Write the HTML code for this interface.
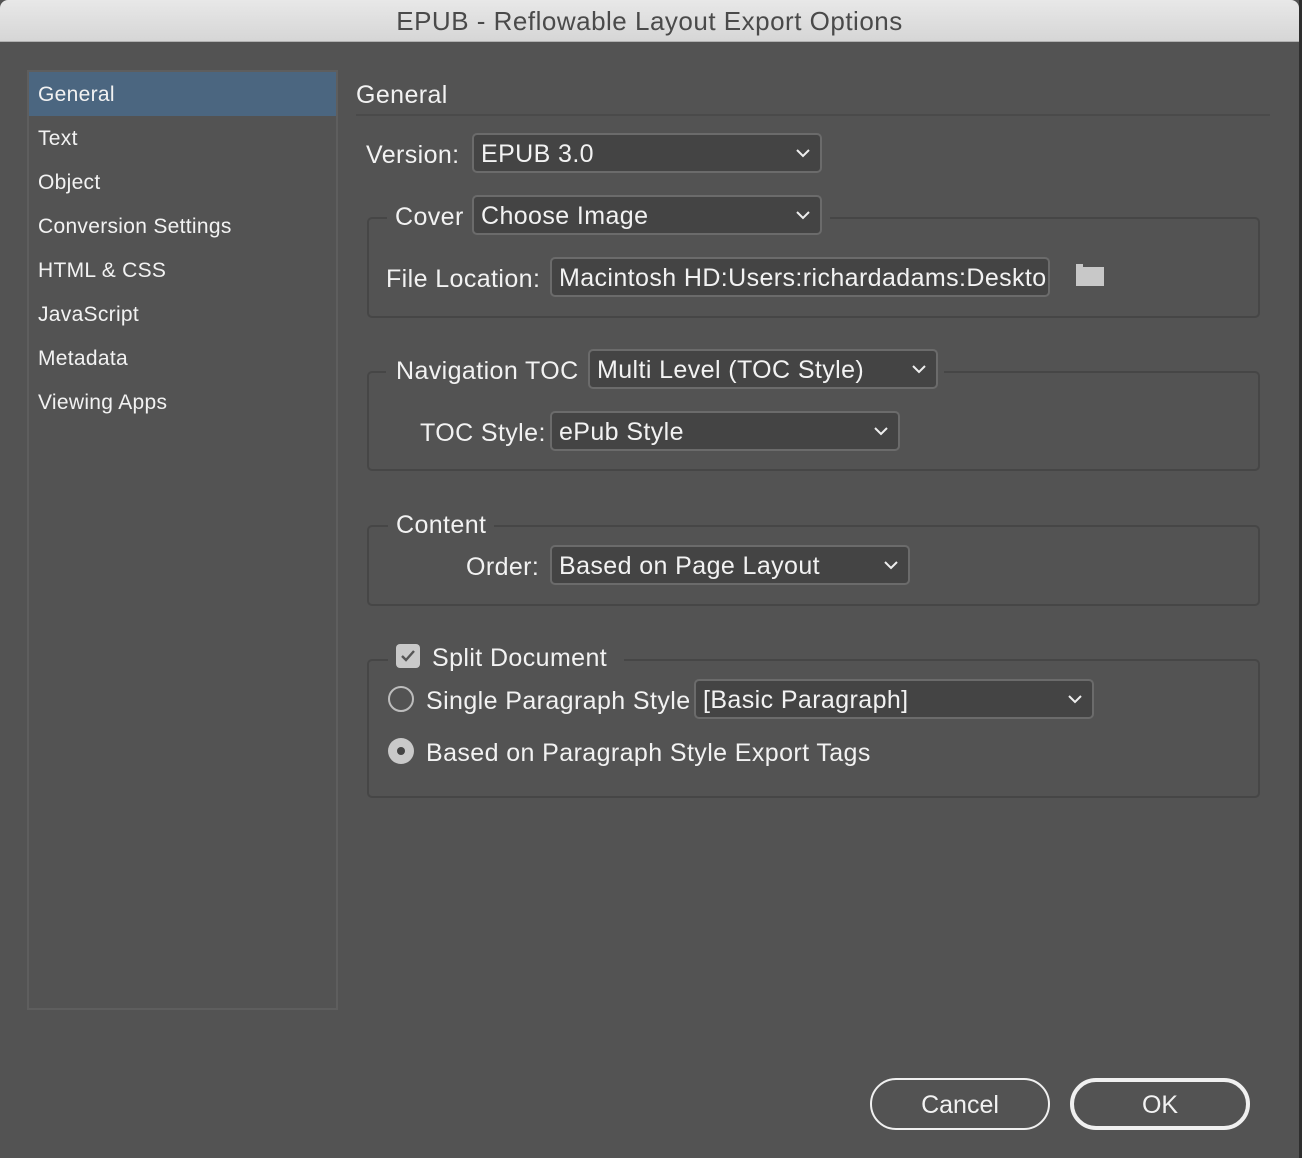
<!DOCTYPE html>
<html><head><meta charset="utf-8"><style>
*{box-sizing:border-box;margin:0;padding:0}
body{width:1302px;height:1158px;background:#535353;font-family:"Liberation Sans",sans-serif;color:#f2f2f2;position:relative;overflow:hidden}
.a{position:absolute;white-space:nowrap}
#title{left:0;top:0;width:1299px;height:42px;background:linear-gradient(#e8e8e8,#d6d6d6);border-bottom:1px solid #b0b0b0;border-radius:8px 8px 0 0;color:#4a4a4a;font-size:26px;letter-spacing:0.5px;text-align:center;line-height:42px;padding-left:0}
#edge{left:1299px;top:0;width:3px;height:1158px;background:#2e2e2e}
#side{left:27px;top:70px;width:311px;height:940px;border:2px solid #5e5e5e}
.si{left:38px;font-size:21px;letter-spacing:0.3px}
#sel{left:29px;top:72px;width:307px;height:44px;background:#4b6680}
.lbl{font-size:25px;letter-spacing:0.4px}
.dd{background:#444;border:2px solid #6b6b6b;border-radius:5px;font-size:25px;letter-spacing:0.4px;padding-left:7px;line-height:38px;height:40px;overflow:hidden}
.dd svg{position:absolute;right:10px;top:14px}
.grp{border:2px solid #464646;border-radius:5px}
.gl{background:#535353;padding:0 8px}
.btn{border:2px solid #f0f0f0;border-radius:26px;font-size:25px;text-align:center;line-height:50px;height:52px}
</style></head><body>
<div class="a" id="title">EPUB - Reflowable Layout Export Options</div>
<div class="a" id="edge"></div>
<div class="a" id="side"></div>
<div class="a" id="sel"></div>
<div class="a si" style="top:83px">General</div>
<div class="a si" style="top:127px">Text</div>
<div class="a si" style="top:171px">Object</div>
<div class="a si" style="top:215px">Conversion Settings</div>
<div class="a si" style="top:259px">HTML &amp; CSS</div>
<div class="a si" style="top:303px">JavaScript</div>
<div class="a si" style="top:347px">Metadata</div>
<div class="a si" style="top:391px">Viewing Apps</div>

<div class="a" style="left:356px;top:81px;font-size:25px;letter-spacing:0.4px">General</div>
<div class="a" style="left:356px;top:114px;width:914px;height:2px;background:#4a4a4a"></div>

<div class="a lbl" style="left:366px;top:141px">Version:</div>
<div class="a dd" style="left:472px;top:133px;width:350px">EPUB 3.0<svg width="14" height="9"><path d="M1 1l6 6 6-6" stroke="#eee" stroke-width="2" fill="none"/></svg></div>

<div class="a grp" style="left:367px;top:217px;width:893px;height:101px"></div>
<div class="a lbl gl" style="left:387px;top:203px">Cover</div>
<div class="a" style="left:464px;top:195px;width:366px;height:44px;background:#535353"></div>
<div class="a dd" style="left:472px;top:195px;width:350px">Choose Image<svg width="14" height="9"><path d="M1 1l6 6 6-6" stroke="#eee" stroke-width="2" fill="none"/></svg></div>
<div class="a lbl" style="left:386px;top:265px">File Location:</div>
<div class="a dd" style="left:550px;top:257px;width:500px">Macintosh HD:Users:richardadams:Desktop</div>
<div class="a" style="left:1076px;top:264px;width:7px;height:3px;background:#c8c8c8"></div>
<div class="a" style="left:1076px;top:267px;width:28px;height:19px;background:#c8c8c8"></div>

<div class="a grp" style="left:367px;top:371px;width:893px;height:100px"></div>
<div class="a" style="left:386px;top:348px;width:558px;height:44px;background:#535353"></div>
<div class="a lbl" style="left:396px;top:357px">Navigation TOC</div>
<div class="a dd" style="left:588px;top:349px;width:350px">Multi Level (TOC Style)<svg width="14" height="9"><path d="M1 1l6 6 6-6" stroke="#eee" stroke-width="2" fill="none"/></svg></div>
<div class="a lbl" style="left:420px;top:419px">TOC Style:</div>
<div class="a dd" style="left:550px;top:411px;width:350px">ePub Style<svg width="14" height="9"><path d="M1 1l6 6 6-6" stroke="#eee" stroke-width="2" fill="none"/></svg></div>

<div class="a grp" style="left:367px;top:525px;width:893px;height:81px"></div>
<div class="a lbl gl" style="left:388px;top:511px">Content</div>
<div class="a lbl" style="left:466px;top:553px">Order:</div>
<div class="a dd" style="left:550px;top:545px;width:360px">Based on Page Layout<svg width="14" height="9"><path d="M1 1l6 6 6-6" stroke="#eee" stroke-width="2" fill="none"/></svg></div>

<div class="a grp" style="left:367px;top:659px;width:893px;height:139px"></div>
<div class="a" style="left:388px;top:640px;width:236px;height:36px;background:#535353"></div>
<div class="a" style="left:396px;top:644px;width:24px;height:24px;background:#c9c9c9;border-radius:4px"><svg width="24" height="24"><path d="M6 12l4 4 8-9" stroke="#555" stroke-width="2.4" fill="none"/></svg></div>
<div class="a lbl" style="left:432px;top:644px">Split Document</div>
<div class="a" style="left:388px;top:686px;width:26px;height:26px;border:2px solid #bdbdbd;border-radius:50%"></div>
<div class="a lbl" style="left:426px;top:687px">Single Paragraph Style</div>
<div class="a dd" style="left:694px;top:679px;width:400px">[Basic Paragraph]<svg width="14" height="9"><path d="M1 1l6 6 6-6" stroke="#eee" stroke-width="2" fill="none"/></svg></div>
<div class="a" style="left:388px;top:738px;width:26px;height:26px;background:#c9c9c9;border-radius:50%"><div style="position:absolute;left:9px;top:9px;width:8px;height:8px;border-radius:50%;background:#444"></div></div>
<div class="a lbl" style="left:426px;top:739px">Based on Paragraph Style Export Tags</div>

<div class="a btn" style="left:870px;top:1078px;width:180px">Cancel</div>
<div class="a btn" style="left:1070px;top:1078px;width:180px;border-width:4px;line-height:46px">OK</div>
</body></html>
